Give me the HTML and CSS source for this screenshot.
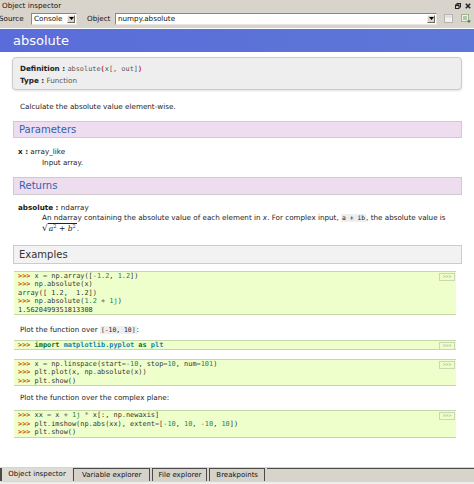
FILE: index.html
```html
<!DOCTYPE html>
<html>
<head>
<meta charset="utf-8">
<link rel="stylesheet" href="styles.css">
</head>
<body>
<div class="window">
  <div class="titlebar">
    <span class="title">Object inspector</span>
    <span class="wbtns">
      <svg width="6" height="6" viewBox="0 0 6 6"><rect x="2" y="0.5" width="3.5" height="3.5" fill="none" stroke="#222" stroke-width="1"/><rect x="0.5" y="2" width="3.5" height="3.5" fill="#d8d4cc" stroke="#222" stroke-width="1"/><line x1="0.5" y1="2.5" x2="4" y2="2.5" stroke="#222" stroke-width="1.2"/></svg>
      <svg width="6" height="6" viewBox="0 0 6 6"><path d="M0.8 0.8L5.2 5.2M5.2 0.8L0.8 5.2" stroke="#222" stroke-width="1.5"/></svg>
    </span>
  </div>
  <div class="toolbar">
    <span class="lbl src">Source</span>
    <span class="combo"><span class="ctext">Console</span><span class="arrow"><svg width="5" height="3" viewBox="0 0 5 3"><path d="M0 0H5L2.5 3Z" fill="#000"/></svg></span></span>
    <span class="lbl obj">Object</span>
    <span class="input"><span class="ctext">numpy.absolute</span><span class="arrow"><svg width="5" height="3" viewBox="0 0 5 3"><path d="M0 0H5L2.5 3Z" fill="#000"/></svg></span></span>
    <span class="tbicon ic1">
      <svg width="9" height="9" viewBox="0 0 9 9"><rect x="0.5" y="0.5" width="8" height="8" fill="#f2f2f0" stroke="#b4b4b0"/><rect x="1.5" y="1.5" width="6" height="2" fill="#dadad6"/></svg>
    </span>
    <span class="tbicon ic2">
      <svg width="10" height="9" viewBox="0 0 10 9"><rect x="0.5" y="0.5" width="7" height="7" fill="#eef3ea" stroke="#9db291"/><path d="M2 3H6M2 5H6" stroke="#6f9d5f"/><path d="M6 6.5L10 6.5L8 9Z" fill="#3d7a3d"/></svg>
    </span>
  </div>
  <div class="content">
    <div class="h1bar">absolute</div>
    <div class="defbox">
      <div class="defline"><b>Definition :</b> <span class="mono">absolute<span class="paren">(</span>x[, out]<span class="paren">)</span></span></div>
      <div class="defline"><b>Type :</b> <span class="grey">Function</span></div>
    </div>
    <p class="para p-calc">Calculate the absolute value element-wise.</p>
    <div class="sect purple sect-params">Parameters</div>
    <div class="field f-first f-x"><b>x :</b> array_like</div>
    <div class="field desc d-input">Input array.</div>
    <div class="sect purple sect-returns">Returns</div>
    <div class="field f-first f-abs"><b>absolute :</b> ndarray</div>
    <div class="field desc d-abs">An ndarray containing the absolute value of each element in <i>x</i>. For complex input, <code>a + ib</code>, the absolute value is</div>
    <div class="field desc math"><span class="sqrt">&radic;</span><span class="rad"><i>a</i><sup>2</sup> + <i>b</i><sup>2</sup></span>.</div>
    <div class="sect grey-sect sect-examples">Examples</div>
    <div class="code c1"><span class="cbtn">&gt;&gt;&gt;</span><pre><span class="gp">&gt;&gt;&gt; </span>x <span class="o">=</span> np<span class="o">.</span>array([<span class="o">-</span><span class="m">1.2</span>, <span class="m">1.2</span>])
<span class="gp">&gt;&gt;&gt; </span>np<span class="o">.</span>absolute(x)
<span class="go">array([ 1.2,  1.2])</span>
<span class="gp">&gt;&gt;&gt; </span>np<span class="o">.</span>absolute(<span class="m">1.2</span> <span class="o">+</span> <span class="m">1j</span>)
<span class="go">1.5620499351813308</span></pre></div>
    <p class="para p-plot1">Plot the function over <code>[-10, 10]</code>:</p>
    <div class="code c2"><span class="cbtn">&gt;&gt;&gt;</span><pre><span class="gp">&gt;&gt;&gt; </span><span class="k">import</span> <span class="nn">matplotlib.pyplot</span> <span class="k">as</span> <span class="nn">plt</span></pre></div>
    <div class="code c3"><span class="cbtn">&gt;&gt;&gt;</span><pre><span class="gp">&gt;&gt;&gt; </span>x <span class="o">=</span> np<span class="o">.</span>linspace(start<span class="o">=-</span><span class="m">10</span>, stop<span class="o">=</span><span class="m">10</span>, num<span class="o">=</span><span class="m">101</span>)
<span class="gp">&gt;&gt;&gt; </span>plt<span class="o">.</span>plot(x, np<span class="o">.</span>absolute(x))
<span class="gp">&gt;&gt;&gt; </span>plt<span class="o">.</span>show()</pre></div>
    <p class="para p-plot2">Plot the function over the complex plane:</p>
    <div class="code c4"><span class="cbtn">&gt;&gt;&gt;</span><pre><span class="gp">&gt;&gt;&gt; </span>xx <span class="o">=</span> x <span class="o">+</span> <span class="m">1j</span> <span class="o">*</span> x[:, np<span class="o">.</span>newaxis]
<span class="gp">&gt;&gt;&gt; </span>plt<span class="o">.</span>imshow(np<span class="o">.</span>abs(xx), extent<span class="o">=</span>[<span class="o">-</span><span class="m">10</span>, <span class="m">10</span>, <span class="o">-</span><span class="m">10</span>, <span class="m">10</span>])
<span class="gp">&gt;&gt;&gt; </span>plt<span class="o">.</span>show()</pre></div>
  </div>
  <div class="tabbar">
    <span class="tab active">Object inspector</span>
    <span class="tab t-var">Variable explorer</span>
    <span class="tab t-file">File explorer</span>
    <span class="tab t-bp">Breakpoints</span>
    <span class="tabrest"></span>
  </div>
</div>
</body>
</html>
```
FILE: styles.css
```css
html, body {
  margin: 0;
  padding: 0;
  background: #ffffff;
}
body {
  font-family: "DejaVu Sans", "Noto Sans", sans-serif;
  font-size: 7.2px;
  color: #222;
}
.window {
  width: 474px;
  height: 484px;
  display: flex;
  flex-direction: column;
  overflow: hidden;
}
.titlebar {
  height: 11px;
  flex: none;
  background: #d8d4cc;
  display: flex;
  align-items: center;
  justify-content: space-between;
  padding: 0 3px 0 2px;
  font-size: 7.2px;
  color: #111;
}
.wbtns {
  display: flex;
  gap: 4px;
  align-items: center;
}
.toolbar {
  height: 17px;
  flex: none;
  box-sizing: border-box;
  padding-top: 1.5px;
  background: #d8d4cc;
  display: flex;
  align-items: flex-start;
  font-size: 7.2px;
  color: #111;
}
.lbl { line-height: 12px; }
.lbl.src { margin-left: -1px; width: 32px; }
.lbl.obj { margin-left: 10px; width: 28px; }
.combo, .input {
  height: 12px;
  box-sizing: border-box;
  background: #fff;
  border: 1px solid #8a877f;
  border-right-color: #e8e6e0;
  border-bottom-color: #e8e6e0;
  display: flex;
  align-items: center;
  justify-content: space-between;
  padding-left: 2px;
}
.combo { width: 46px; }
.input { width: 322px; }
.arrow {
  width: 8px;
  height: 8px;
  box-sizing: border-box;
  background: #d8d4cc;
  border: 1px solid #f4f2ee;
  border-right-color: #6e6b64;
  border-bottom-color: #6e6b64;
  display: flex;
  align-items: center;
  justify-content: center;
  margin-right: 1px;
}
.tbicon {
  display: flex;
  align-items: center;
  height: 12px;
}
.ic1 { margin-left: 7px; }
.ic2 { margin-left: 8px; }
.content {
  flex: 1;
  padding: 1px 12px 0 13px;
  background: #fff;
  overflow: hidden;
}
.h1bar {
  height: 23px;
  margin: 0 -12px 0 -13px;
  padding-left: 13px;
  background: linear-gradient(to right, #5a6cd9, #5d77d7);
  color: #fff;
  font-size: 13px;
  line-height: 24px;
}
.defbox {
  margin-top: 5px;
  margin-left: -1px;
  background: #eeeeee;
  border: 1px solid #cccccc;
  border-radius: 4px;
  box-shadow: 0 1px 2px rgba(0,0,0,0.12);
  padding: 4.5px 7px 1.5px 7px;
}
.defline {
  line-height: 12.5px;
  font-size: 7.2px;
}
.defline b { color: #222; }
.mono {
  font-family: "DejaVu Sans Mono", monospace;
  font-size: 6.9px;
  color: #555;
}
.paren { color: #d02020; font-weight: bold; }
.grey { color: #555; }
.para {
  margin: 0;
  padding-left: 7px;
  line-height: 10px;
}
.p-calc { margin-top: 11.7px; }
.sect {
  height: 15.5px;
  border: 1px solid #cccccc;
  padding-left: 5px;
  font-size: 10px;
  line-height: 16px;
}
.purple {
  background: #eedcef;
  color: #2f63b2;
}
.grey-sect {
  background: #f2f2f2;
  color: #333;
}
.sect-params { margin-top: 9.3px; }
.sect-returns { margin-top: 8.8px; }
.sect-examples { margin-top: 10.8px; height: 16.7px; line-height: 17px; }
.field {
  padding-left: 5px;
  line-height: 11px;
}
.f-x { margin-top: 8px; }
.f-abs { margin-top: 7.4px; }
.field.desc { padding-left: 29px; }
.d-abs { line-height: 9px; }
.field.math { line-height: 11px; font-family: "DejaVu Serif", serif; font-size: 7.6px; }
.sqrt { font-size: 9px; }
.rad { border-top: 1px solid #222; padding: 0 1px; }
.rad sup { font-size: 5px; line-height: 0; vertical-align: 3px; }
code {
  font-family: "DejaVu Sans Mono", monospace;
  font-size: 6.4px;
  background: #eeeeee;
  padding: 0 1px;
  color: #222;
}
.code {
  position: relative;
  margin-left: 1px;
  margin-right: 6px;
  background: #eeffcc;
  border-top: 1px solid #c4d8a8;
  border-bottom: 1px solid #c4d8a8;
  padding: 0 4px;
}
.code pre {
  margin: 0;
  font-family: "DejaVu Sans Mono", monospace;
  font-size: 6.9px;
  line-height: 8.5px;
  color: #333;
}
.cbtn {
  position: absolute;
  right: 1px;
  top: 1px;
  width: 16px;
  height: 8px;
  box-sizing: border-box;
  border: 1px solid #c8d8b0;
  color: #a8b098;
  font-family: "DejaVu Sans Mono", monospace;
  font-size: 4.8px;
  line-height: 6px;
  text-align: center;
}
.gp { color: #c65d09; font-weight: bold; }
.go { color: #333; }
.o { color: #666666; }
.m { color: #208050; }
.k { color: #007020; font-weight: bold; }
.nn { color: #0e84b5; font-weight: bold; }
.c1 { margin-top: 7.3px; }
.p-plot1 { margin-top: 9.5px; }
.c2 { margin-top: 5px; }
.c3 { margin-top: 8.2px; }
.p-plot2 { margin-top: 7.1px; }
.c4 { margin-top: 7px; }
.tabbar {
  height: 17px;
  flex: none;
  box-sizing: border-box;
  padding-top: 1px;
  background: #d8d4cc;
  display: flex;
  align-items: flex-start;
  border-bottom: 2px solid #eeeeec;
  position: relative;
}
.tab {
  height: 13px;
  box-sizing: border-box;
  border: 1px solid #4a4a46;
  border-bottom: none;
  padding: 0 6px;
  font-size: 7px;
  line-height: 12px;
  color: #111;
  background: #d6d2ca;
  margin-right: 2px;
}
.tab.active {
  background: #dfdcd5;
  border: none;
  border-left: 2px solid #4a4a46;
  height: 13px;
  padding: 0 6px 0 6px;
  width: 72px;
  margin-right: 1px;
  text-align: center;
}
.t-var { padding: 0 8px; }
.t-file { padding: 0 5px; }
.t-bp { padding: 0 6px; }
.tabrest {
  flex: 1;
  border-top: 1px solid #4a4a46;
  height: 0;
}
```
